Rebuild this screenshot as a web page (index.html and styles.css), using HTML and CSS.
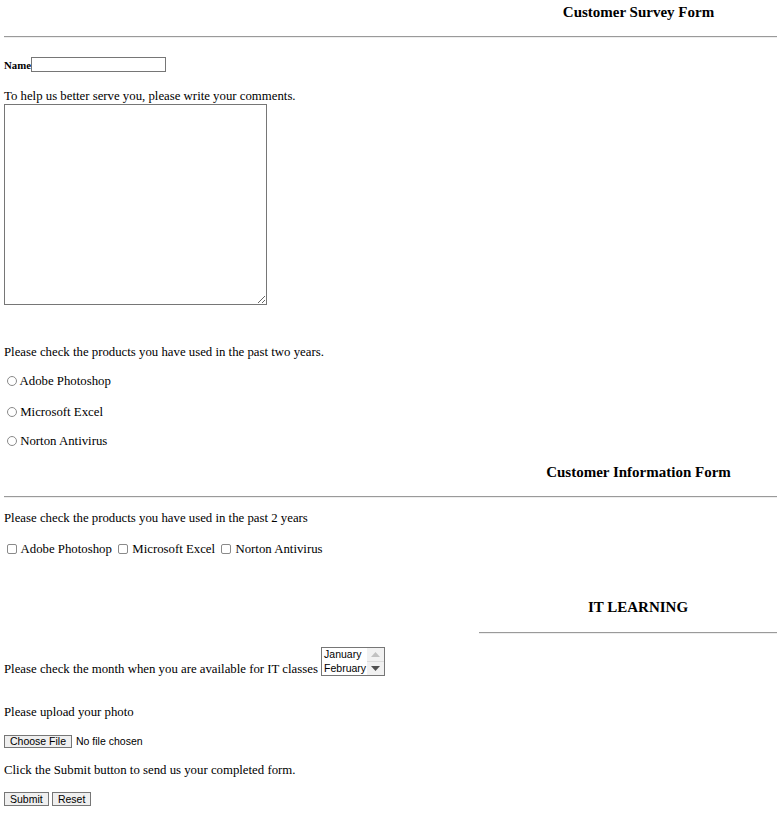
FILE: index.html
```html
<!DOCTYPE html>
<html>
<head>
<meta charset="utf-8">
<link rel="stylesheet" href="styles.css">
</head>
<body>
<h3 class="title t1">Customer Survey Form</h3>
<hr class="rule">
<form class="survey">
  <div class="name-row"><label class="name-label">Name</label><input class="name-input" type="text"></div>
  <p class="line comments-label">To help us better serve you, please write your comments.</p>
  <textarea class="comments"></textarea>
  <p class="line products-q">Please check the products you have used in the past two years.</p>
  <p class="line opt o1"><input class="radio" type="radio" name="p"> Adobe Photoshop</p>
  <p class="line opt o2"><input class="radio" type="radio" name="p"> Microsoft Excel</p>
  <p class="line opt o3"><input class="radio" type="radio" name="p"> Norton Antivirus</p>
</form>
<h3 class="title t2">Customer Information Form</h3>
<hr class="rule">
<form class="info">
  <p class="line info-q">Please check the products you have used in the past 2 years</p>
  <p class="line checks"><input class="check" type="checkbox"> Adobe Photoshop <input class="check" type="checkbox"> Microsoft Excel <input class="check" type="checkbox"> Norton Antivirus</p>
</form>
<div class="it-block">
  <h3 class="title t3">IT LEARNING</h3>
  <hr class="rule it-rule">
</div>
<form class="it">
  <p class="line month-row">Please check the month when you are available for IT classes <span class="listbox" role="listbox"><span class="scrollbar"><span class="sb-btn sb-up"><svg width="9" height="5" viewBox="0 0 9 5"><path d="M0 5 L4.5 0 L9 5 Z" fill="#c1c1c1"/></svg></span><span class="sb-btn sb-down"><svg width="9" height="5" viewBox="0 0 9 5"><path d="M0 0 L4.5 5 L9 0 Z" fill="#505050"/></svg></span></span><span class="option">January</span><span class="option">February</span></span></p>
  <p class="line upload-q">Please upload your photo</p>
  <p class="line file-row"><input class="file" type="file"></p>
  <p class="line submit-q">Click the Submit button to send us your completed form.</p>
  <p class="line buttons"><input class="btn" type="submit" value="Submit"> <input class="btn" type="reset" value="Reset"></p>
</form>
</body>
</html>
```
FILE: styles.css
```css
html, body {
  margin: 0;
  padding: 0;
  background: #fff;
}
body {
  padding: 0 0 0 4px;
  font-family: "Liberation Serif", "Times New Roman", serif;
  font-size: 12.8px;
  color: #000;
}
.title {
  margin: 0;
  font-size: 15px;
  font-weight: bold;
  text-align: center;
  padding-left: 496px;
  line-height: 17px;
}
.t1 { padding-top: 4px; }
.rule {
  margin: 0;
  border: 0;
  border-top: 1px solid #9a9a9a;
  border-bottom: 1px solid #eee;
  height: 0;
}
.t1 + .rule { margin-top: 15px; }
form { margin: 0; }
.name-row {
  margin-top: 19px;
  display: flex;
  align-items: center;
}
.name-label {
  font-size: 10.8px;
  font-weight: bold;
  padding-top: 1px;
}
.name-input {
  width: 135px;
  height: 15px;
  box-sizing: border-box;
  border: 1px solid #767676;
  margin: 0;
  padding: 0;
}
.line {
  margin: 0;
  line-height: 15px;
}
.comments-label { margin-top: 17px; }
.comments {
  display: block;
  margin: 0;
  width: 263px;
  height: 201px;
  box-sizing: border-box;
  border: 1px solid #767676;
  padding: 2px;
}
.products-q { margin-top: 40px; }
.o1 { margin-top: 14px; }
.o2 { margin-top: 16px; }
.o3 { margin-top: 14px; }
.radio {
  appearance: none;
  -webkit-appearance: none;
  box-sizing: border-box;
  margin: 0 0 0 3px;
  width: 10px;
  height: 10px;
  border: 1px solid #8a8a8a;
  border-radius: 50%;
  background: #fff;
  vertical-align: -1px;
}
.t2 { margin-top: 15px; }
.t2 + .rule { margin-top: 15px; }
.info-q { margin-top: 13px; }
.checks { margin-top: 16px; }
.check {
  appearance: none;
  -webkit-appearance: none;
  box-sizing: border-box;
  margin: 0 1px 0 3px;
  width: 10px;
  height: 10px;
  border: 1px solid #8a8a8a;
  border-radius: 2px;
  background: #fff;
  vertical-align: -1px;
}
.it-block {
  margin-top: 42px;
  padding-left: 475px;
}
.t3 { padding-left: 20px; }
.it-rule { margin-top: 16px; }
.month-row { margin-top: 13px; }
.listbox {
  display: inline-block;
  box-sizing: border-box;
  width: 64px;
  height: 29px;
  border: 1px solid #767676;
  vertical-align: -3px;
  font-family: "Liberation Sans", Arial, sans-serif;
  font-size: 10.5px;
  line-height: 13.5px;
  background: #fff;
  overflow: hidden;
}
.option {
  display: block;
  white-space: nowrap;
  padding-left: 2px;
}
.scrollbar {
  float: right;
  width: 17px;
  height: 27px;
  background: #f1f1f1;
  display: flex;
  flex-direction: column;
  justify-content: space-between;
}
.sb-btn {
  height: 13px;
  display: flex;
  align-items: center;
  justify-content: center;
}
.sb-up { border-bottom: 1px solid #dcdcdc; }
.upload-q { margin-top: 28px; }
.file-row { margin-top: 14px; }
.file {
  font-family: "Liberation Sans", Arial, sans-serif;
  font-size: 10.5px;
  line-height: 13px;
}
.file::file-selector-button {
  font-family: "Liberation Sans", Arial, sans-serif;
  font-size: 10.5px;
  height: 13px;
  line-height: 11px;
  padding: 0 5px;
  margin: 0 4px 0 0;
  border: 1px solid #767676;
  border-radius: 0;
  background: #efefef;
  color: #000;
}
.submit-q { margin-top: 14px; }
.buttons { margin-top: 14px; }
.btn {
  font-family: "Liberation Sans", Arial, sans-serif;
  font-size: 10.5px;
  height: 14px;
  line-height: 12px;
  margin: 0;
  padding: 0 5px;
  border: 1px solid #767676;
  border-radius: 0;
  background: #efefef;
  color: #000;
}
```
